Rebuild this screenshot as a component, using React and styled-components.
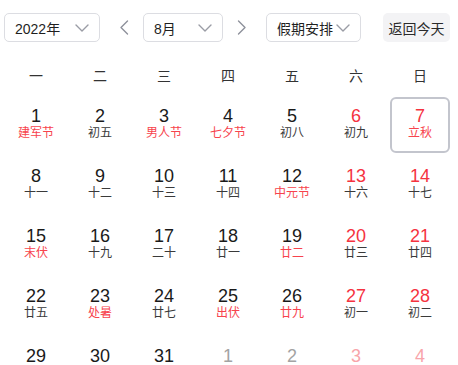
import React from "react";
import styled, { createGlobalStyle } from "styled-components";

const Global = createGlobalStyle`
  html, body { margin: 0; padding: 0; background: #fff; }
  body { font-family: "Liberation Sans", "Noto Sans CJK SC", sans-serif; }
  * { box-sizing: border-box; }
`;

const Page = styled.div`
  width: 458px;
  height: 365px;
  overflow: hidden;
  background: #fff;
`;

const Header = styled.div`
  display: flex;
  align-items: center;
  gap: 12px;
  padding: 13px 0 0 4px;
`;

const NavGroup = styled.div`
  display: flex;
  align-items: center;
  gap: 7px;
`;

const Select = styled.div`
  width: ${(p) => p.$w}px;
  height: 29px;
  border: 1px solid #dcdde2;
  border-radius: 5px;
  display: flex;
  align-items: center;
  justify-content: space-between;
  padding: 0 10px 0 10px;
  font-family: "Liberation Sans", "Noto Sans CJK SC", sans-serif;
  font-size: 14px;
  color: #1f1f1f;
  background: #fff;
`;

const IconBtn = styled.div`
  width: 24px;
  height: 29px;
  display: flex;
  align-items: center;
  justify-content: center;
`;

const TodayBtn = styled.div`
  margin-left: 10px;
  width: 67px;
  height: 29px;
  border-radius: 5px;
  background: #f3f3f5;
  display: flex;
  align-items: center;
  justify-content: center;
  font-family: "Noto Sans CJK SC", sans-serif;
  font-size: 14px;
  color: #2a2a2a;
`;

const Grid = styled.div`
  display: grid;
  grid-template-columns: repeat(7, 64px);
  padding-left: 4px;
`;

const WeekRow = styled(Grid)`
  margin-top: 13px;
  height: 40px;
`;

const WeekDay = styled.div`
  text-align: center;
  line-height: 40px;
  font-family: "Noto Sans CJK SC", sans-serif;
  font-size: 14px;
  color: #333;
`;

const Cell = styled.div`
  height: 60px;
  padding: 2px;
`;

const Day = styled.div`
  height: 56px;
  border: 2px solid ${(p) => (p.$selected ? "#c3c5cd" : "transparent")};
  border-radius: 6px;
  display: flex;
  flex-direction: column;
  align-items: center;
  padding-top: 8px;
`;

const Num = styled.div`
  font-family: "Liberation Sans", sans-serif;
  font-size: 18px;
  line-height: 18px;
  color: ${(p) =>
    p.$other ? (p.$red ? "#f8a5aa" : "#a3a3a3") : p.$red ? "#f5333f" : "#1a1a1a"};
`;

const Label = styled.div`
  font-family: "Noto Sans CJK SC", sans-serif;
  font-size: 12px;
  line-height: 14px;
  color: ${(p) => (p.$red ? "#f7434d" : "#3a3a3a")};
`;

const ChevronDown = () => (
  <svg width="14" height="8" viewBox="0 0 14 8">
    <path d="M1 1L7 7L13 1" fill="none" stroke="#9a9ca5" strokeWidth="1.4" strokeLinecap="round" strokeLinejoin="round" />
  </svg>
);

const ChevronSide = ({ dir }) => (
  <svg width="10" height="15" viewBox="0 0 10 15">
    <path
      d={dir === "left" ? "M8.5 1L2 7.5L8.5 14" : "M1.5 1L8 7.5L1.5 14"}
      fill="none"
      stroke="#8e919b"
      strokeWidth="1.4"
      strokeLinecap="round"
      strokeLinejoin="round"
    />
  </svg>
);

const weekdays = ["一", "二", "三", "四", "五", "六", "日"];

const days = [
  [1, "建军节", 1], [2, "初五"], [3, "男人节", 1], [4, "七夕节", 1], [5, "初八"], [6, "初九"], [7, "立秋", 1],
  [8, "十一"], [9, "十二"], [10, "十三"], [11, "十四"], [12, "中元节", 1], [13, "十六"], [14, "十七"],
  [15, "末伏", 1], [16, "十九"], [17, "二十"], [18, "廿一"], [19, "廿二", 1], [20, "廿三"], [21, "廿四"],
  [22, "廿五"], [23, "处暑", 1], [24, "廿七"], [25, "出伏", 1], [26, "廿九", 1], [27, "初一"], [28, "初二"],
  [29, "初三"], [30, "初四"], [31, "初五"], [1, "初六", 0, 1], [2, "初七", 0, 1], [3, "初八", 0, 1], [4, "初九", 0, 1],
];

export default function App() {
  return (
    <Page>
      <Global />
      <Header>
        <Select $w={96}>
          <span>2022年</span>
          <ChevronDown />
        </Select>
        <NavGroup>
          <IconBtn><ChevronSide dir="left" /></IconBtn>
          <Select $w={80}>
            <span>8月</span>
            <ChevronDown />
          </Select>
          <IconBtn><ChevronSide dir="right" /></IconBtn>
        </NavGroup>
        <Select $w={95}>
          <span>假期安排</span>
          <ChevronDown />
        </Select>
        <TodayBtn>返回今天</TodayBtn>
      </Header>
      <WeekRow>
        {weekdays.map((w) => (
          <WeekDay key={w}>{w}</WeekDay>
        ))}
      </WeekRow>
      <Grid>
        {days.map(([n, label, redLabel, other], i) => {
          const weekend = i % 7 >= 5;
          return (
            <Cell key={i}>
              <Day $selected={!other && n === 7}>
                <Num $red={weekend} $other={!!other}>{n}</Num>
                <Label $red={!!redLabel}>{label}</Label>
              </Day>
            </Cell>
          );
        })}
      </Grid>
    </Page>
  );
}
